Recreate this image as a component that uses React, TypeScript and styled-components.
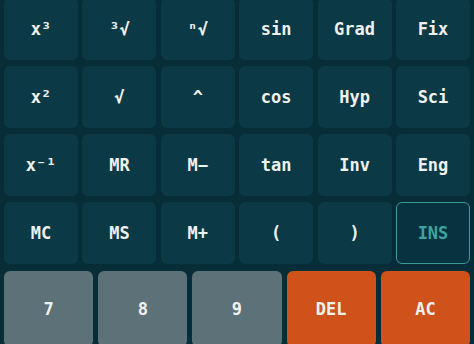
import styled, { createGlobalStyle } from "styled-components";

const GlobalStyle = createGlobalStyle`
  html, body {
    margin: 0;
    padding: 0;
    background: #062d38;
    overflow: hidden;
  }
  body {
    font-family: "DejaVu Sans Mono", "Liberation Mono", monospace;
  }
`;

const Pad = styled.div`
  display: flex;
  flex-direction: column;
  gap: 7px;
  padding: 0 4px;
  margin-top: -2px;
  height: 360px;
`;

const FnGrid = styled.div`
  display: grid;
  grid-template-columns: repeat(6, 1fr);
  grid-auto-rows: 62px;
  column-gap: 4.4px;
  row-gap: 6px;
`;

const NumRow = styled.div`
  display: grid;
  grid-template-columns: repeat(5, 1fr);
  column-gap: 5px;
  height: 76px;
`;

type Tone = "fn" | "outline" | "num" | "danger";

const Key = styled.button<{ $tone: Tone }>`
  display: flex;
  align-items: center;
  justify-content: center;
  border-radius: 6px;
  font-family: "DejaVu Sans Mono", "Liberation Mono", monospace;
  font-weight: 700;
  font-size: 17px;
  padding: 0;
  cursor: pointer;
  color: ${(p) => (p.$tone === "outline" ? "#3ea39f" : "#eef1ee")};
  background: ${(p) =>
    p.$tone === "num" ? "#5d7178" : p.$tone === "danger" ? "#cf521b" : p.$tone === "outline" ? "#07323f" : "#0c3946"};
  border: ${(p) => (p.$tone === "outline" ? "1.5px solid #3a9a97" : "none")};
`;

const fnKeys: { label: string; tone?: Tone }[] = [
  { label: "x³" }, { label: "³√" }, { label: "ⁿ√" }, { label: "sin" }, { label: "Grad" }, { label: "Fix" },
  { label: "x²" }, { label: "√" }, { label: "^" }, { label: "cos" }, { label: "Hyp" }, { label: "Sci" },
  { label: "x⁻¹" }, { label: "MR" }, { label: "M−" }, { label: "tan" }, { label: "Inv" }, { label: "Eng" },
  { label: "MC" }, { label: "MS" }, { label: "M+" }, { label: "(" }, { label: ")" }, { label: "INS", tone: "outline" },
];

const numKeys: { label: string; tone: Tone }[] = [
  { label: "7", tone: "num" },
  { label: "8", tone: "num" },
  { label: "9", tone: "num" },
  { label: "DEL", tone: "danger" },
  { label: "AC", tone: "danger" },
];

export default function App() {
  return (
    <>
      <GlobalStyle />
      <Pad>
        <FnGrid>
          {fnKeys.map((k) => (
            <Key key={k.label} $tone={k.tone || "fn"}>
              {k.label}
            </Key>
          ))}
        </FnGrid>
        <NumRow>
          {numKeys.map((k) => (
            <Key key={k.label} $tone={k.tone}>
              {k.label}
            </Key>
          ))}
        </NumRow>
      </Pad>
    </>
  );
}
